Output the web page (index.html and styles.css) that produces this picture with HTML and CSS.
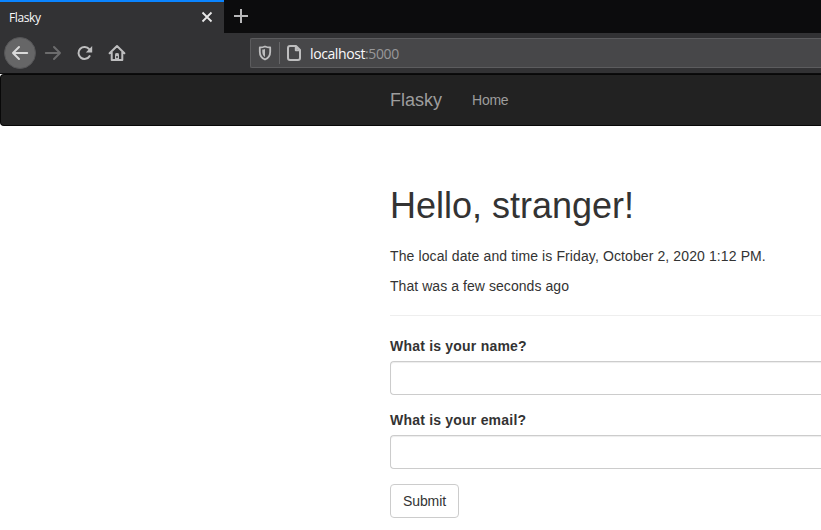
FILE: index.html
```html
<!DOCTYPE html>
<html lang="en">
<head>
<meta charset="utf-8">
<title>Flasky</title>
<link rel="stylesheet" href="styles.css">
</head>
<body>
<header class="browser">
  <div class="tabs">
    <div class="tab">
      <span>Flasky</span>
      <svg class="tab-close" width="12" height="12" viewBox="0 0 12 12"><path d="M1.500 1.500l9 9M10.500 1.500l-9 9"/></svg>
    </div>
    <svg class="tab-new" width="16" height="16" viewBox="0 0 16 16"><path d="M7 1v14M0 8h14"/></svg>
  </div>
  <div class="toolbar">
    <div class="back"><svg class="icon" width="18" height="16" viewBox="0 0 18 16"><path d="M16.2 8H2M8 2L2 8l6 6"/></svg></div>
    <svg class="icon forward" width="18" height="16" viewBox="0 0 18 16"><path d="M1.8 8H16M10 2l6 6-6 6"/></svg>
    <svg class="icon reload" width="16" height="16" viewBox="0 0 16 16"><path d="M12.6 11.1A6 6 0 1 1 12.2 4.2L14 6"/><path class="fill" d="M15.2 1v6.4H8.8z"/></svg>
    <svg class="icon home" width="18" height="18" viewBox="0 0 18 18"><path d="M1.6 9.2L9 2l7.400 7.200M3.700 8.300V16h10.600V8.300"/><path class="fill" d="M7 10.400q0-1.400 2-1.400t2 1.400V16H7z"/><path class="door" d="M9 12v2"/></svg>
    <div class="address">
      <svg class="icon shield" width="14" height="16" viewBox="0 0 14 16"><path d="M7 1.500c1.800.8 3.500 1 5.200 1v4.200c0 3.800-1.700 6.300-5.200 7.800-3.500-1.500-5.200-4-5.200-7.800V2.500c1.700 0 3.400-.2 5.200-1z"/><path class="fill" d="M7 4v8C5 10.800 4.300 9 4.300 6.800V4.600Q5.700 4.500 7 4z"/></svg>
      <span class="divider"></span>
      <svg class="icon page" width="14" height="16" viewBox="0 0 14 16"><path d="M3 1h6l4 4v8a2 2 0 0 1-2 2H3a2 2 0 0 1-2-2V3a2 2 0 0 1 2-2zM8.800 1v4.200H13"/></svg>
      <span class="url">localhost<span class="port">:5000</span></span>
    </div>
  </div>
</header>
<nav class="navbar">
  <a class="brand">Flasky</a>
  <a class="nav-link">Home</a>
</nav>
<main class="container">
  <section class="page-header">
    <h1>Hello, stranger!</h1>
    <p class="date">The local date and time is Friday, October 2, 2020 1:12 PM.</p>
    <p class="elapsed">That was a few seconds ago</p>
  </section>
  <form>
    <div class="form-group">
      <label for="name">What is your name?</label>
      <input id="name" type="text">
    </div>
    <div class="form-group">
      <label for="email">What is your email?</label>
      <input id="email" type="text">
    </div>
    <button type="button">Submit</button>
  </form>
</main>
</body>
</html>
```
FILE: styles.css
```css
* { box-sizing: border-box; }
body {
  margin: 0;
  background: #fff;
  color: #333;
  font: 14px/20px "Liberation Sans", Arial, sans-serif;
}
svg { display: block; flex: none; }
.browser {
  height: 74px;
  background: #323234;
  border-bottom: 1px solid #0c0c0d;
  font-family: "Open Sans", sans-serif;
}
.tabs { display: flex; height: 33px; background: #0c0c0d; }
.tab {
  display: flex;
  align-items: center;
  justify-content: space-between;
  width: 224px;
  padding: 0 11px 0 9px;
  border-top: 2px solid #0a84ff;
  background: #323234;
  color: #f9f9fa;
  font-size: 12px;
  letter-spacing: -0.4px;
}
.tab-close, .tab-new { fill: none; stroke: #e8e8e8; stroke-width: 1.8; }
.tab-close { margin-bottom: 1px; }
.tab-new { margin: 8px 0 0 10px; stroke: #b8b8b9; stroke-width: 2; }
.toolbar { display: flex; align-items: center; height: 40px; padding-left: 4px; }
.icon {
  fill: none;
  stroke: #bebebf;
  stroke-width: 2;
  stroke-linecap: round;
  stroke-linejoin: round;
}
.icon .fill { fill: #bebebf; stroke: none; }
.icon .door { stroke: #323234; stroke-width: 1.500; stroke-linecap: butt; }
.back {
  display: flex;
  align-items: center;
  justify-content: center;
  width: 32px;
  height: 32px;
  border: 1px solid #555557;
  border-radius: 50%;
  background: #666667;
}
.back .icon { stroke: #dadada; }
.forward { margin-left: 8px; stroke: #6c6c6d; }
.reload { margin-left: 15px; }
.home { margin-left: 15px; }
.address {
  display: flex;
  align-items: center;
  flex: 1;
  height: 30px;
  margin-left: 124px;
  padding-left: 7px;
  border: 1px solid #5c5c5e;
  border-right: 0;
  border-radius: 2px 0 0 2px;
  background: #474749;
}
.shield { stroke-width: 1.800; }
.divider { width: 1px; height: 22px; margin: 0 7px; background: #666668; }
.url { padding-top: 2px; margin-left: 9px; color: #f9f9fa; font-size: 14px; letter-spacing: -0.4px; }
.port { color: #98989a; }
.navbar {
  display: flex;
  align-items: center;
  height: 52px;
  padding-left: 389px;
  border: 1px solid #080808;
  border-right: 0;
  border-radius: 4px 0 0 4px;
  background: #222;
  color: #9d9d9d;
}
.brand { font-size: 18px; }
.nav-link { margin-left: 30px; letter-spacing: -0.25px; }
.container { margin: 60px 0 0 390px; }
.page-header { padding-bottom: 9px; margin-bottom: 20px; border-bottom: 1px solid #eee; }
h1 { margin: 0 0 20px; font-size: 36px; font-weight: 500; line-height: 1.1; }
p { margin: 0 0 10px; }
.date { letter-spacing: 0.11px; }
.elapsed { letter-spacing: 0.06px; }
.form-group { margin-bottom: 15px; }
label { display: block; margin-bottom: 5px; font-weight: 700; letter-spacing: 0.21px; }
input {
  display: block;
  width: 100%;
  height: 34px;
  padding: 6px 12px;
  border: 1px solid #ccc;
  border-right: 0;
  border-radius: 4px 0 0 4px;
  background: #fff;
  box-shadow: inset 0 1px 1px rgba(0, 0, 0, .075);
  font: inherit;
}
button {
  display: block;
  width: 69px;
  height: 34px;
  padding: 6px 0;
  border: 1px solid #ccc;
  border-radius: 4px;
  background: #fff;
  color: #333;
  font: inherit;
  letter-spacing: -0.1px;
}
```
